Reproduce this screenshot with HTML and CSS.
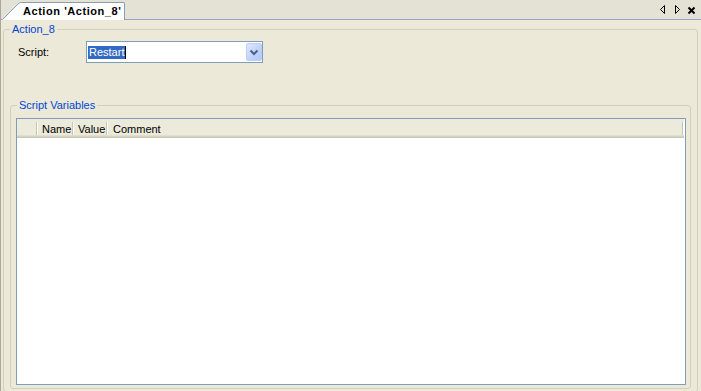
FILE: index.html
```html
<!DOCTYPE html>
<html>
<head>
<meta charset="utf-8">
<link rel="stylesheet" href="styles.css">
</head>
<body>
<div class="page">
  <div class="tabstrip">
    <div class="tab">
      <svg class="tab-slant" width="20" height="18" viewBox="0 0 20 18"><path d="M0 18 L17 1 Q18 0 20 0 L20 18 Z" fill="#fff"/><path d="M0.5 17.5 L16.8 1.3 Q17.8 0.5 20 0.5" fill="none" stroke="#8c9cb6"/></svg>
      <div class="tab-label">Action 'Action_8'</div>
    </div>
    <div class="tab-nav">
      <svg class="nav-icon" width="7" height="19" viewBox="0 0 7 19"><path d="M5.5 5.5 V13.5 L1.5 9.5 Z" fill="none" stroke="#000"/></svg>
      <svg class="nav-icon nav-next" width="7" height="19" viewBox="0 0 7 19"><path d="M1.5 5.5 V13.5 L5.5 9.5 Z" fill="none" stroke="#000"/></svg>
      <svg class="nav-icon nav-close" width="9" height="19" viewBox="0 0 9 19"><path d="M1.5 7.5 L7.5 13.5 M7.5 7.5 L1.5 13.5" fill="none" stroke="#000" stroke-width="2"/></svg>
    </div>
  </div>
  <div class="panel">
    <fieldset class="group group-main">
      <legend>Action_8</legend>
      <div class="script-row">
        <label class="script-label">Script:</label>
        <div class="combo">
          <span class="combo-text"><span class="sel">Restart</span><span class="caret"></span></span>
          <span class="combo-btn"><svg width="14" height="16" viewBox="0 0 14 16"><path d="M3.5 6.5 L7 10 L10.5 6.5" fill="none" stroke="#4d6185" stroke-width="2"/></svg></span>
        </div>
      </div>
      <fieldset class="group group-vars">
        <legend>Script Variables</legend>
        <div class="grid">
          <div class="grid-head">
            <div class="hcell c0"><span class="htext"></span><span class="sep"></span></div>
            <div class="hcell c1"><span class="htext">Name</span><span class="sep"></span></div>
            <div class="hcell c2"><span class="htext">Value</span><span class="sep"></span></div>
            <div class="hcell c3"><span class="htext">Comment</span><span class="sep"></span></div>
          </div>
        </div>
      </fieldset>
    </fieldset>
  </div>
</div>
</body>
</html>
```
FILE: styles.css
```css
* { box-sizing: border-box; }
html, body { margin: 0; }
body {
  font: 11px "Liberation Sans", Arial, sans-serif;
  color: #000;
  background: #ece9d8;
  overflow: hidden;
  width: 701px;
  height: 391px;
}
.page {
  height: 391px;
  border-left: 1px solid #aca899;
  display: flex;
  flex-direction: column;
  overflow: hidden;
}
.tabstrip {
  height: 20px;
  flex: none;
  display: flex;
  align-items: flex-end;
  background: #e4e2d5;
  box-shadow: inset 0 -1px #91a7c9;
  padding-left: 1px;
}
.tab { display: flex; height: 18px; }
.tab-slant { display: block; }
.tab-label {
  height: 18px;
  background: #fff;
  border-top: 1px solid #8c9cb6;
  border-right: 1px solid #8c9cb6;
  border-top-right-radius: 2px;
  padding: 2px 3px 0 1px;
  font-weight: bold;
  letter-spacing: 0.55px;
  line-height: 13px;
  white-space: nowrap;
}
.tab-nav {
  margin-left: auto;
  align-self: stretch;
  display: flex;
  align-items: flex-start;
  margin-right: 5px;
}
.nav-icon { display: block; }
.nav-next { margin-left: 8px; }
.nav-close { margin-left: 6px; }
.panel {
  flex: 1;
  padding: 3px 3px 0 2px;
  min-height: 0;
}
.group {
  margin: 0;
  border: 1px solid #d0d0bf;
  border-radius: 3px;
  min-width: 0;
}
.group > legend {
  padding: 0 2px;
  color: #0046d5;
  line-height: 13px;
}
.group.group-main { padding: 0 6px 2px 6px; }
.group.group-vars { padding: 0 4px 3px 5px; margin-top: 36px; }
.group-vars > legend { margin-left: 1px; }
.script-row {
  display: flex;
  align-items: center;
  margin-top: 5px;
  padding-left: 8px;
}
.script-label { width: 68px; line-height: 13px; }
.combo {
  width: 177px;
  height: 22px;
  border: 1px solid #7f9db9;
  background: #fff;
  display: flex;
  align-items: center;
  padding-left: 1px;
}
.combo-text { flex: 1; display: flex; align-items: center; }
.sel {
  background: #316ac5;
  color: #fff;
  padding: 0 1px;
  line-height: 13px;
}
.caret { width: 1px; height: 13px; background: #000; }
.combo-btn {
  width: 16px;
  height: 18px;
  border: 1px solid #bccff9;
  border-radius: 2px;
  background: linear-gradient(135deg, #dfe8fe 0%, #c3d4fc 50%, #b3c8f7 100%);
  display: flex;
}
.combo-btn svg { display: block; }
.grid {
  height: 267px;
  margin-top: 6px;
  border: 1px solid #7f9db9;
  background: #fff;
}
.grid-head {
  display: flex;
  height: 19px;
  background: #ebeadb;
  box-shadow: inset 0 -1px #cbc7b8, inset 0 -2px #d6d2c2, inset 0 -3px #e2decd;
  margin-right: 1px;
}
.hcell {
  display: flex;
  justify-content: space-between;
  align-items: flex-start;
  padding-top: 3px;
}
.htext { padding-top: 1px; line-height: 13px; white-space: nowrap; }
.sep {
  width: 2px;
  height: 13px;
  border-left: 1px solid #c7c5b2;
  border-right: 1px solid #fff;
}
.c0 { width: 21px; }
.c1 { width: 36px; padding-left: 4px; }
.c2 { width: 34px; padding-left: 4px; }
.c3 { flex: 1; padding-left: 5px; }
```
